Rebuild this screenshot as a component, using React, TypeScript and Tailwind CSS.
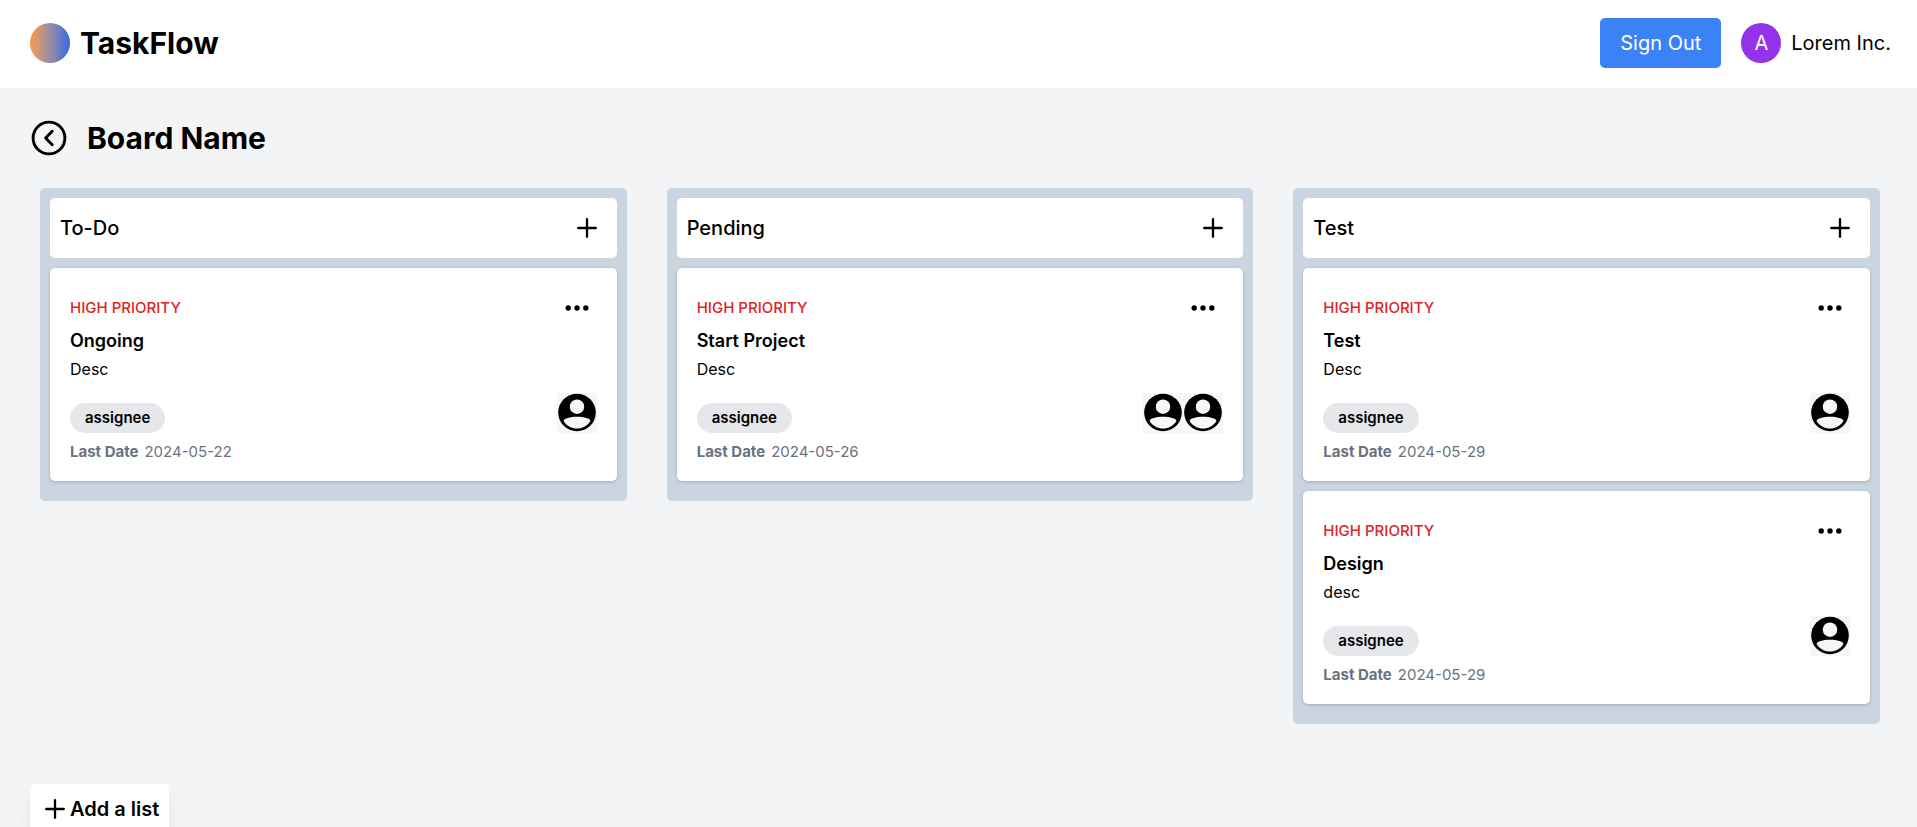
type Task = {
  priority: string;
  title: string;
  description: string;
  label: string;
  lastDate: string;
  assignees: number;
};

type List = {
  name: string;
  tasks: Task[];
};

const lists: List[] = [
  {
    name: "To-Do",
    tasks: [
      { priority: "HIGH PRIORITY", title: "Ongoing", description: "Desc", label: "assignee", lastDate: "2024-05-22", assignees: 1 },
    ],
  },
  {
    name: "Pending",
    tasks: [
      { priority: "HIGH PRIORITY", title: "Start Project", description: "Desc", label: "assignee", lastDate: "2024-05-26", assignees: 2 },
    ],
  },
  {
    name: "Test",
    tasks: [
      { priority: "HIGH PRIORITY", title: "Test", description: "Desc", label: "assignee", lastDate: "2024-05-29", assignees: 1 },
      { priority: "HIGH PRIORITY", title: "Design", description: "desc", label: "assignee", lastDate: "2024-05-29", assignees: 1 },
    ],
  },
];

const PlusIcon = () => (
  <svg viewBox="0 0 20 20" className="size-5 shrink-0" fill="none" stroke="currentColor" strokeWidth="2.3" strokeLinecap="round" aria-hidden="true">
    <path d="M10 1.2v17.6M1.2 10h17.6" />
  </svg>
);

const DotsIcon = () => (
  <svg viewBox="0 0 40 40" className="size-10" fill="currentColor" aria-hidden="true">
    <circle cx="11.2" cy="20" r="2.7" />
    <circle cx="20" cy="20" r="2.7" />
    <circle cx="28.8" cy="20" r="2.7" />
  </svg>
);

const BackIcon = () => (
  <svg viewBox="0 0 36 36" className="size-9" fill="none" stroke="currentColor" strokeWidth="2.9" strokeLinecap="round" strokeLinejoin="round" aria-hidden="true">
    <circle cx="18" cy="18" r="15.9" />
    <path d="M21.2 11.2 14.6 18l6.6 6.8" />
  </svg>
);

const Avatar = () => (
  <svg viewBox="0 0 40 40" className="size-10 bg-[#f6f6f6]" role="img" aria-label="Assignee">
    <circle cx="20" cy="19.5" r="18.8" fill="#000" />
    <circle cx="20" cy="13.7" r="7.2" fill="#f6f6f6" />
    <path d="M6.6 28C6.6 25.4 13 23.8 20 23.8S33.4 25.4 33.4 28C30.5 32.8 25.5 35.6 20 35.6S9.5 32.8 6.6 28Z" fill="#f6f6f6" />
  </svg>
);

const Header = () => (
  <header className="flex items-center justify-between bg-white pt-[18px] pb-5 pl-[30px] pr-[26px]">
    <div className="flex items-center gap-[10px]">
      <div className="size-10 rounded-full bg-linear-to-r from-[#fb9a3c] to-[#2f67e0]" />
      <span className="text-[30px] leading-10 font-bold">TaskFlow</span>
    </div>
    <div className="flex items-center gap-5">
      <button type="button" className="rounded-[5px] bg-[#3b82f6] px-5 py-[10px] text-[20px] leading-[30px] text-white">
        Sign Out
      </button>
      <div className="flex items-center gap-[10px]">
        <div className="flex size-10 items-center justify-center rounded-full bg-[#9333ea] text-[20px] leading-[30px] text-white">A</div>
        <span className="text-[20px] leading-[30px]">Lorem Inc.</span>
      </div>
    </div>
  </header>
);

const TaskCard = ({ task }: { task: Task }) => (
  <article className="rounded-[5px] bg-white px-5 pt-5 pb-[19px] shadow-[0_1px_4px_rgba(0,0,0,0.1),0_1px_3px_rgba(0,0,0,0.1)]">
    <div className="flex items-center justify-between">
      <span className="text-[15px] leading-5 font-medium text-[#dc2626]">{task.priority}</span>
      <button type="button" aria-label="Task options">
        <DotsIcon />
      </button>
    </div>
    <h3 className="text-[18px] leading-[25px] font-semibold">{task.title}</h3>
    <p className="mt-1 text-[16px] leading-[25px]">{task.description}</p>
    <div className="mt-[11px] flex items-end justify-between">
      <span className="rounded-full bg-[#e5e7eb] px-[15px] py-[5px] text-[15px] leading-5 font-semibold">{task.label}</span>
      <div className="flex">
        {Array.from({ length: task.assignees }, (_, i) => (
          <Avatar key={i} />
        ))}
      </div>
    </div>
    <p className="mt-[9px] flex gap-[6px] text-[15px] leading-5 text-[#6b7280]">
      <strong className="font-bold">Last Date</strong>
      <span>{task.lastDate}</span>
    </p>
  </article>
);

const BoardList = ({ list }: { list: List }) => (
  <section className="rounded-[5px] bg-[#cbd5e1] px-[10px] pt-[10px] pb-5">
    <div className="flex items-center justify-between rounded-[5px] bg-white py-[15px] pl-[10px] pr-5">
      <h2 className="text-[20px] leading-[30px] font-medium">{list.name}</h2>
      <button type="button" aria-label={`Add task to ${list.name}`}>
        <PlusIcon />
      </button>
    </div>
    <div className="mt-[10px] flex flex-col gap-[10px]">
      {list.tasks.map((task) => (
        <TaskCard key={task.title} task={task} />
      ))}
    </div>
  </section>
);

export default function App() {
  return (
    <div className="h-screen overflow-y-auto bg-[#f3f4f6] font-['Inter',sans-serif] text-black [scrollbar-width:none]">
      <Header />
      <main className="pb-5">
        <div className="flex items-center gap-5 pt-[30px] pl-[31px]">
          <button type="button" aria-label="Back to boards">
            <BackIcon />
          </button>
          <h1 className="text-[30px] leading-10 font-bold">Board Name</h1>
        </div>
        <div className="mt-[30px] grid grid-cols-3 items-start gap-10 pl-10 pr-[37px]">
          {lists.map((list) => (
            <BoardList key={list.name} list={list} />
          ))}
        </div>
        <div className="mt-[60px] pl-[30px]">
          <button type="button" className="flex items-center gap-[5px] rounded-[5px] bg-white py-[10px] pr-[10px] pl-[15px] text-[20px] leading-[30px] font-semibold shadow-[0_12px_18px_-4px_rgba(0,0,0,0.1),0_5px_8px_-5px_rgba(0,0,0,0.1)]">
            <PlusIcon />
            Add a list
          </button>
        </div>
      </main>
    </div>
  );
}
